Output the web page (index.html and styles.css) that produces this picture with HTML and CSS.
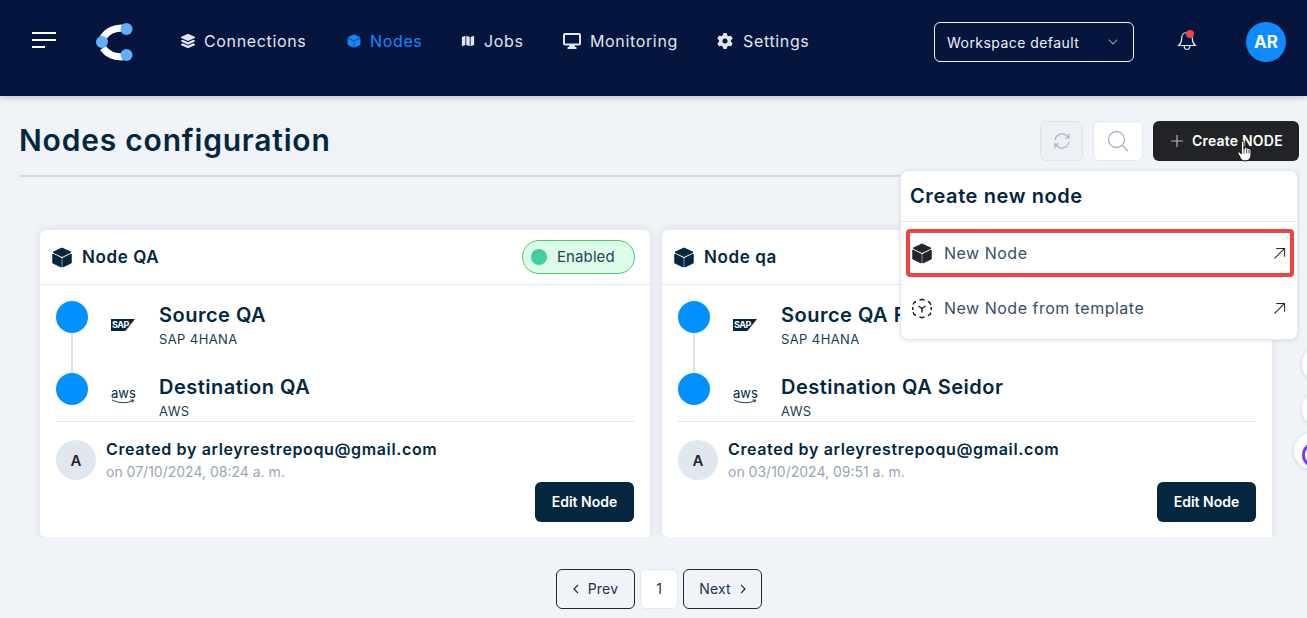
FILE: index.html
```html
<!DOCTYPE html>
<html lang="en">
<head>
<meta charset="utf-8">
<title>Nodes configuration</title>
<link rel="stylesheet" href="styles.css">
</head>
<body>
<svg class="defs" width="0" height="0" aria-hidden="true">
  <symbol id="cube" viewBox="0 0 20 21"><path stroke="currentColor" stroke-width="1" stroke-linejoin="round" d="M10 1 19 5.200 10 9.500 1 5.200zM.8 7 9.200 11.200V20L.8 16zM19.200 7 10.800 11.200V20L19.200 16z"/></symbol>
  <symbol id="arrow" viewBox="0 0 14 14"><path d="M1.500 12.500 12.500 1.500M3.500 1.500h9v9" fill="none" stroke="currentColor" stroke-width="1.100"/></symbol>
</svg>

<header class="topbar">
  <button class="burger" aria-label="Menu"><span class="l1"></span><span class="l2"></span><span class="l3"></span></button>
  <svg class="logo" viewBox="0 0 38 38" width="38" height="38">
    <path d="M27 5C18 5 11 8 7 15" fill="none" stroke="#fff" stroke-width="7"/>
    <path d="M7 25C11 31 18 34 27 34" fill="none" stroke="#fff" stroke-width="7"/>
    <circle cx="30.500" cy="6" r="6" fill="#60aefc"/><circle cx="6" cy="19" r="6" fill="#60aefc"/><circle cx="30.500" cy="32" r="6" fill="#60aefc"/>
  </svg>
  <nav class="nav">
    <a class="nav-item nav-conn"><svg class="nav-icon layers" viewBox="0 0 576 512"><path fill="currentColor" d="M264.500 5.200c14.900-6.900 32.100-6.900 47 0l218.600 101c8.500 3.900 13.900 12.400 13.900 21.800s-5.400 17.900-13.900 21.800l-218.600 101c-14.900 6.900-32.100 6.900-47 0L45.900 149.800C37.400 145.800 32 137.300 32 128s5.400-17.900 13.900-21.800L264.500 5.200zM476.900 209.600l53.200 24.600c8.500 3.900 13.900 12.400 13.900 21.800s-5.400 17.900-13.900 21.800l-218.600 101c-14.900 6.900-32.100 6.900-47 0L45.900 277.800C37.400 273.800 32 265.300 32 256s5.400-17.900 13.900-21.800l53.200-24.600 152 70.200c23.400 10.800 50.400 10.800 73.800 0l152-70.200zm-152 198.200l152-70.200 53.200 24.600c8.500 3.900 13.900 12.400 13.900 21.800s-5.400 17.900-13.900 21.800l-218.600 101c-14.900 6.900-32.100 6.900-47 0L45.900 405.800C37.400 401.800 32 393.300 32 384s5.400-17.900 13.900-21.800l53.200-24.600 152 70.200c23.400 10.800 50.400 10.800 73.800 0z"/></svg>Connections</a>
    <a class="nav-item nav-nodes active"><svg class="nav-icon small" fill="currentColor"><use href="#cube"/></svg>Nodes</a>
    <a class="nav-item nav-jobs"><svg class="nav-icon small" viewBox="0 0 16 16"><path fill="currentColor" d="M1 3.500 5 2v10.500L1 14zM6 2l4 1.500V14l-4-1.500zM11 3.500 15 2v10.500L11 14z"/></svg>Jobs</a>
    <a class="nav-item nav-mon"><svg class="nav-icon wide" viewBox="0 0 18 16"><path fill="currentColor" fill-rule="evenodd" d="M2 0h14a2 2 0 0 1 2 2v8.500a2 2 0 0 1-2 2h-4.500l.5 1.500h1.500v2H4.500v-2H6l.5-1.500H2a2 2 0 0 1-2-2V2a2 2 0 0 1 2-2zm0 2v8.500h14V2z"/></svg>Monitoring</a>
    <a class="nav-item nav-set"><svg class="nav-icon gear" viewBox="0 0 512 512"><path fill="currentColor" d="M495.900 166.600c3.200 8.700 .5 18.400-6.400 24.600l-43.300 39.400c1.100 8.300 1.700 16.800 1.700 25.400s-.6 17.100-1.700 25.400l43.300 39.400c6.900 6.200 9.600 15.900 6.400 24.600c-4.400 11.900-9.700 23.300-15.800 34.300l-4.700 8.100c-6.600 11-14 21.400-22.100 31.200c-5.900 7.200-15.700 9.600-24.500 6.800l-55.700-17.700c-13.400 10.300-28.200 18.900-44 25.400l-12.500 57.100c-2 9.100-9 16.300-18.200 17.800c-13.800 2.300-28 3.500-42.500 3.500s-28.700-1.200-42.500-3.500c-9.200-1.500-16.200-8.700-18.200-17.800l-12.500-57.100c-15.800-6.500-30.600-15.100-44-25.400L83.100 425.900c-8.800 2.800-18.600 .3-24.500-6.800c-8.100-9.800-15.500-20.200-22.100-31.200l-4.700-8.100c-6.100-11-11.400-22.400-15.800-34.300c-3.200-8.700-.5-18.400 6.400-24.600l43.300-39.400C64.600 273.100 64 264.600 64 256s.6-17.100 1.700-25.400L22.400 191.200c-6.900-6.200-9.600-15.900-6.400-24.600c4.400-11.900 9.700-23.300 15.800-34.300l4.700-8.100c6.600-11 14-21.400 22.100-31.200c5.900-7.200 15.700-9.600 24.500-6.800l55.700 17.700c13.400-10.300 28.200-18.900 44-25.400l12.500-57.100c2-9.100 9-16.300 18.200-17.800C227.300 1.200 241.500 0 256 0s28.700 1.200 42.500 3.500c9.200 1.500 16.200 8.700 18.200 17.800l12.500 57.100c15.800 6.500 30.600 15.100 44 25.400l55.700-17.700c8.800-2.800 18.600-.3 24.500 6.800c8.100 9.800 15.500 20.200 22.100 31.200l4.700 8.100c6.100 11 11.400 22.400 15.800 34.300zM256 336a80 80 0 1 0 0-160 80 80 0 1 0 0 160z"/></svg>Settings</a>
  </nav>
  <div class="workspace"><span>Workspace default</span><svg class="chev" viewBox="0 0 10 6" width="10" height="6"><path d="M.7.700 5 5l4.300-4.300" fill="none" stroke="#8f98ab" stroke-width="1.100"/></svg></div>
  <div class="bell">
    <svg viewBox="0 0 20 22" width="20" height="22"><path d="M10 2.500c-3.300 0-5.300 2.500-5.300 5.700 0 4-1 5.500-3 7.300h16.600c-2-1.800-3-3.300-3-7.300 0-3.200-2-5.700-5.300-5.700zM7.200 15.800c0 2.200 1.200 3.700 2.800 3.700s2.800-1.500 2.800-3.700" fill="none" stroke="#e5e8ee" stroke-width="1.200"/></svg>
    <span class="bell-dot"></span>
  </div>
  <div class="avatar-top">AR</div>
</header>

<main class="page">
  <div class="title-row">
    <h1>Nodes configuration</h1>
    <div class="actions">
      <button class="icon-btn refresh" aria-label="Refresh"><svg viewBox="0 0 18 18" width="18" height="18"><path d="M2.200 8A7 7 0 0 1 14.600 4.500L16 6M15.800 10A7 7 0 0 1 3.400 13.500L2 12M16 1.800V6h-4.200M2 16.200V12h4.200" fill="none" stroke="#a3b0c6" stroke-width="1.200"/></svg></button>
      <button class="icon-btn search" aria-label="Search"><svg viewBox="0 0 22 22" width="22" height="22"><circle cx="9.500" cy="9.500" r="8" fill="none" stroke="#a3b0c6" stroke-width="1.300"/><path d="M15.500 15.500 21 21" stroke="#a3b0c6" stroke-width="1.300"/></svg></button>
      <button class="create"><svg viewBox="0 0 12 12" width="12" height="12"><path d="M6 0v12M0 6h12" stroke="#b4b5b7" stroke-width="1.200"/></svg>Create NODE</button>
      <svg class="cursor" viewBox="0 0 16 22" width="16" height="22"><path d="M5 1.500c.8-.7 2-.2 2 .9V9l.5-1.500c1.200-.5 2 0 2.200.8.900-.6 2-.2 2.200.8 1-.4 2.100.2 2.100 1.300V15c0 3-2 5.800-5 5.800H7.500c-2 0-3-1-4-2.500L1 13.500c-.6-1.200.8-2.300 1.800-1.300L4.300 14V2.500z" fill="#fff" stroke="#111" stroke-width="1"/><path d="M7 9v4.500M9.700 8.800v4.700M12 9.800v3.700" stroke="#111" stroke-width=".8"/></svg>
      <section class="popup">
        <h2>Create new node</h2>
        <a class="popup-item marked"><svg class="popup-icon" fill="#22252b" color="#22252b"><use href="#cube"/></svg><span>New Node</span><svg class="popup-arrow"><use href="#arrow"/></svg></a>
        <a class="popup-item"><svg class="popup-icon" viewBox="0 0 20 20"><path d="M7.500 1.800 10 .8l2.500 1M16 3l2 1.200.8 2.300M19.200 8.500v3M18.800 14l-.8 2-2 1.200M12.500 18.500 10 19.300l-2.500-.8M4 17l-2-1-.8-2.200M.8 11.500v-3M1.200 6 2 4l2-1M6.500 7.500 10 10l3.500-2.500M10 10v4" fill="none" stroke="#22252b" stroke-width="1.500"/></svg><span>New Node from template</span><svg class="popup-arrow"><use href="#arrow"/></svg></a>
      </section>
    </div>
  </div>

  <div class="cards">
    <article class="card">
      <div class="card-head">
        <svg class="card-cube" fill="#03273f" color="#03273f"><use href="#cube"/></svg>
        <h3>Node QA</h3>
        <span class="badge"><i></i>Enabled</span>
      </div>
      <div class="flow">
        <div class="flow-row">
          <span class="dot"></span>
          <span class="sap"><b>SAP</b></span>
          <div class="flow-text"><strong>Source QA</strong><small>SAP 4HANA</small></div>
        </div>
        <div class="flow-row">
          <span class="dot last"></span>
          <span class="aws">aws<svg viewBox="0 0 24 5" width="24" height="5"><path d="M1 .8C7 4.500 17 4.500 22 1.500M19.500 1 22.500 1l-.8 2.500" fill="none" stroke="#03273f" stroke-width=".9"/></svg></span>
          <div class="flow-text"><strong>Destination QA</strong><small>AWS</small></div>
        </div>
      </div>
      <div class="card-foot">
        <div class="creator">
          <span class="avatar">A</span>
          <div><p class="by">Created by arleyrestrepoqu@gmail.com</p><p class="on">on 07/10/2024, 08:24 a. m.</p></div>
        </div>
        <button class="edit">Edit Node</button>
      </div>
    </article>

    <article class="card">
      <div class="card-head">
        <svg class="card-cube" fill="#03273f" color="#03273f"><use href="#cube"/></svg>
        <h3>Node qa</h3>
      </div>
      <div class="flow">
        <div class="flow-row">
          <span class="dot"></span>
          <span class="sap"><b>SAP</b></span>
          <div class="flow-text"><strong>Source QA F</strong><small>SAP 4HANA</small></div>
        </div>
        <div class="flow-row">
          <span class="dot last"></span>
          <span class="aws">aws<svg viewBox="0 0 24 5" width="24" height="5"><path d="M1 .8C7 4.500 17 4.500 22 1.500M19.500 1 22.500 1l-.8 2.500" fill="none" stroke="#03273f" stroke-width=".9"/></svg></span>
          <div class="flow-text"><strong>Destination QA Seidor</strong><small>AWS</small></div>
        </div>
      </div>
      <div class="card-foot">
        <div class="creator">
          <span class="avatar">A</span>
          <div><p class="by">Created by arleyrestrepoqu@gmail.com</p><p class="on">on 03/10/2024, 09:51 a. m.</p></div>
        </div>
        <button class="edit">Edit Node</button>
      </div>
    </article>
  </div>

  <div class="pager">
    <button class="pg"><svg viewBox="0 0 6 10" width="6" height="10"><path d="M5 .8 1 5l4 4.200" fill="none" stroke="#22252b" stroke-width="1.200"/></svg>Prev</button>
    <span class="pg-num">1</span>
    <button class="pg">Next<svg viewBox="0 0 6 10" width="6" height="10"><path d="M1 .8 5 5 1 9.200" fill="none" stroke="#22252b" stroke-width="1.200"/></svg></button>
  </div>
</main>

<div class="edge-widgets" aria-hidden="true"><span class="w1"></span><span class="w2"></span><span class="w3"></span></div>
</body>
</html>
```

FILE: styles.css
```css
* { box-sizing: border-box; }
html, body { margin: 0; height: 100%; overflow: hidden; }
body {
  background: #f0f3f8;
  font-family: Inter, "Open Sans", sans-serif;
  color: #03273f;
  position: relative;
}
h1, h2, h3, p { margin: 0; }
button { font-family: inherit; cursor: pointer; }
.defs { position: absolute; }

/* top bar */
.topbar {
  height: 96px;
  background: #05153d;
  display: flex;
  align-items: flex-start;
  padding-left: 32px;
  box-shadow: 0 2px 5px rgba(40, 50, 80, .22);
  position: relative;
}
.burger {
  width: 24px; height: 17px;
  padding: 0; margin-top: 32px;
  border: 0; background: none;
  display: flex; flex-direction: column; gap: 5px;
}
.burger span { display: block; height: 2px; background: #fff; }
.burger .l1 { width: 24px; }
.burger .l2 { width: 24px; }
.burger .l3 { width: 13px; }
.logo { margin: 23px 0 0 40px; flex: none; }
.nav { display: flex; margin: 31px 0 0 46px; height: 20px; width: 754px; flex: none; }
.nav-item {
  display: flex; align-items: center;
  font-size: 16px; line-height: 20px; letter-spacing: .65px;
  color: #e0e5ee;
  white-space: nowrap;
}
.nav-icon { width: 16px; height: 14px; margin-right: 8px; flex: none; }
.nav-icon.layers { height: 16px; color: #dfe4ed; }
.nav-icon.small { width: 14px; height: 14px; margin-right: 9px; }
.nav-icon.wide { width: 18px; height: 16px; margin-right: 9px; }
.nav-icon.gear { width: 16px; height: 16px; margin-right: 10px; }
.nav-conn { width: 167px; }
.nav-nodes { width: 114px; }
.nav-jobs { width: 102px; }
.nav-mon { width: 154px; }
.active { color: #0d8bff; }
.workspace {
  width: 200px; height: 40px; margin: 22px 0 0 0;
  border: 1px solid #f1f3f7; border-radius: 6px;
  display: flex; align-items: center; justify-content: space-between;
  padding: 0 15px 0 12px;
  color: #eef1f6; font-size: 14px; letter-spacing: .45px;
  flex: none;
}
.bell { position: relative; margin: 30px 0 0 43px; width: 20px; height: 22px; flex: none; }
.bell-dot { position: absolute; top: 0; left: 9px; width: 8px; height: 8px; border-radius: 50%; background: #ef4444; }
.avatar-top {
  width: 40px; height: 40px; margin: 22px 0 0 49px;
  border-radius: 50%;
  background: #0d8bff; color: #fff;
  font-size: 17px; font-weight: 700;
  display: flex; align-items: center; justify-content: center;
  flex: none;
}

/* page */
.page { padding: 0 8px 0 19px; }
.title-row {
  height: 81px;
  padding-top: 25px;
  border-bottom: 2px solid #d4d9e0;
  display: flex; justify-content: space-between; align-items: flex-start;
}
.title-row h1 {
  font-size: 30px; font-weight: 600; line-height: 38px;
  color: #03273f; letter-spacing: .8px;
}
.actions { display: flex; position: relative; }
.icon-btn {
  height: 40px; padding: 0;
  display: flex; align-items: center; justify-content: center;
  border-radius: 6px;
}
.refresh { width: 43px; margin-right: 10px; background: #edf0f5; border: 1px solid #dfe3ea; }
.search { width: 50px; margin-right: 10px; background: #fff; border: 1px solid #e4e7ec; }
.create {
  width: 146px; height: 40px;
  background: #222326; color: #fff;
  border: 0; border-radius: 6px;
  font-size: 14px; font-weight: 600; letter-spacing: .2px;
  display: flex; align-items: center; gap: 9px;
  padding: 0 0 1px 18px;
}
.cursor { position: absolute; right: 46px; top: 19px; }

/* popup */
.popup {
  position: absolute; top: 49px; right: 1px;
  width: 398px; height: 170px;
  background: #fff;
  border: 1px solid #e3e6eb; border-radius: 8px;
  box-shadow: 0 1px 4px rgba(40, 50, 80, .12);
  z-index: 5;
}
.popup h2 {
  height: 51px; padding-left: 9px;
  font-size: 20px; font-weight: 600; line-height: 51px; letter-spacing: .6px;
  border-bottom: 1px solid #e3e6eb;
}
.popup-item {
  display: flex; align-items: center;
  height: 48px; margin: 7px 3px 0 5px;
  padding: 0 4px 0 2px;
  font-size: 16px; letter-spacing: .5px; color: #34506a;
  border: 4px solid transparent;
}
.popup-item + .popup-item { margin-top: 7px; }
.marked { border-color: #ef4444; border-radius: 4px; }
.popup-icon { width: 20px; height: 21px; margin-right: 12px; flex: none; }
.popup-item span { flex: 1; }
.popup-arrow { width: 13px; height: 13px; color: #22252b; }

/* cards */
.cards {
  display: grid; grid-template-columns: 610px 610px; gap: 12px;
  margin: 53px 0 0 21px;
}
.card {
  height: 307px;
  background: #fff;
  border-radius: 6px 6px 0 6px;
  box-shadow: 0 0 10px rgba(60, 70, 100, .12);
  clip-path: inset(-20px -20px 0 -20px);
}
.card-head {
  height: 55px;
  display: flex; align-items: center;
  padding: 0 15px 0 12px;
  border-bottom: 1px solid #e3e6eb;
}
.card-cube { width: 20px; height: 21px; margin-right: 10px; flex: none; }
.card-head h3 { flex: 1; font-size: 17px; font-weight: 600; letter-spacing: .6px; }
.badge {
  width: 113px; height: 34px;
  display: flex; align-items: center;
  padding: 0 0 1px 8px;
  background: #dcfce7; border: 1px solid #4ac77b; border-radius: 17px;
  font-size: 15px; letter-spacing: .1px; color: #27405a;
}
.badge i { width: 16px; height: 16px; border-radius: 50%; background: #43cc9f; margin: 1px 10px 0 0; }
.flow { margin: 0 16px; height: 137px; padding-top: 16px; border-bottom: 1px solid #e3e6eb; }
.flow-row { display: flex; height: 72px; position: relative; }
.dot {
  width: 32px; height: 32px; border-radius: 50%;
  background: #0090ff; flex: none; position: relative;
}
.dot:not(.last)::after {
  content: ""; position: absolute; left: 15px; top: 32px;
  width: 2px; height: 40px; background: #e0e2e6;
}
.sap, .aws { width: 24px; margin: 0 24px 0 23px; flex: none; }
.sap {
  height: 12px; margin-top: 18px;
  background: #03273f;
  clip-path: polygon(0 0, 100% 0, 60% 100%, 0 100%);
  display: flex; align-items: center;
}
.sap b { color: #fff; font-size: 9px; font-weight: 700; line-height: 12px; letter-spacing: -.5px; margin-left: 1px; }
.aws {
  height: 20px; margin-top: 14px;
  font-size: 13px; line-height: 12px; text-align: center;
  color: #03273f;
}
.aws svg { display: block; }
.flow-text { display: flex; flex-direction: column; }
.flow-text strong { font-size: 20px; font-weight: 600; line-height: 28px; white-space: nowrap; letter-spacing: .5px; }
.flow-text small { font-size: 13px; line-height: 20px; letter-spacing: .4px; color: #1e3a52; }
.card-foot { padding: 18px 16px 0; position: relative; }
.creator { display: flex; gap: 10px; }
.avatar {
  width: 40px; height: 40px; border-radius: 50%;
  background: #e1e7ef; color: #22252b;
  font-size: 15px; font-weight: 600;
  display: flex; align-items: center; justify-content: center;
  flex: none;
}
.by { font-size: 16px; font-weight: 600; line-height: 20px; letter-spacing: .63px; margin-top: -1px; white-space: nowrap; }
.on { font-size: 14px; line-height: 22px; color: #9aa5bb; margin-top: 2px; }
.edit {
  position: absolute; right: 16px; top: 60px;
  width: 99px; height: 40px;
  padding: 0 0 2px;
  background: #03273f; color: #fff;
  border: 0; border-radius: 6px;
  font-size: 14px; font-weight: 600;
}

/* pager */
.pager {
  display: flex; justify-content: center; gap: 5px;
  margin-top: 32px;
}
.pg {
  width: 79px; height: 40px;
  border: 1px solid #22252b; border-radius: 6px;
  background: transparent; color: #22354a;
  font-size: 14px; font-weight: 400; letter-spacing: .2px;
  display: flex; align-items: center; justify-content: center; gap: 9px;
  padding: 0 0 1px;
}
.pg-num {
  width: 38px; height: 40px;
  background: #fff; border: 1px solid #e3e6eb; border-radius: 6px;
  font-size: 14px; color: #22354a;
  display: flex; align-items: center; justify-content: center;
  padding-bottom: 1px;
}

/* floating widgets clipped at the window edge */
.edge-widgets span {
  position: absolute; border-radius: 50%; background: #fff;
  box-shadow: 0 1px 4px rgba(40, 50, 80, .15);
}
.edge-widgets .w1 { left: 1302px; top: 346px; width: 36px; height: 36px; }
.edge-widgets .w2 { left: 1302px; top: 391px; width: 36px; height: 36px; }
.edge-widgets .w3 { left: 1294px; top: 433px; width: 36px; height: 36px; }
.edge-widgets .w3::after {
  content: ""; position: absolute; left: 8px; top: 9px;
  width: 20px; height: 20px; border-radius: 50%;
  border: 3px solid #7c3aed;
}
```
